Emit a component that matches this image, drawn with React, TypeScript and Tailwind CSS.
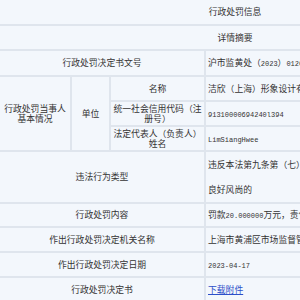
import React from 'react';

const cjk = { fontFamily: '"Noto Sans CJK SC", "Noto Sans", sans-serif' };

function Mono({ children }: { children: React.ReactNode }) {
  return (
    <span className="font-['Liberation_Mono',monospace] text-[7px]">{children}</span>
  );
}

const cell = 'border-2 border-[#dfe5ed] p-0';
const label = `${cell} text-center leading-[10px]`;
const value = `${cell} pl-[2px] text-left whitespace-nowrap`;

export default function App() {
  return (
    <div className="w-[300px] h-[300px] overflow-hidden bg-[#f3f7fc]" style={cjk}>
      <table className="table-fixed border-collapse w-[472px] -mt-[2px] -ml-[2px] text-[8.8px] text-[#333] bg-[#f3f7fc]">
        <colgroup>
          <col className="w-[72px]" />
          <col className="w-[39px]" />
          <col className="w-[95px]" />
          <col className="w-[266px]" />
        </colgroup>
        <tbody>
          <tr className="h-[26px]">
            <td colSpan={4} className={`${cell} text-center`}>
              行政处罚信息
            </td>
          </tr>
          <tr className="h-[25px]">
            <td colSpan={4} className={`${cell} text-center`}>
              详情摘要
            </td>
          </tr>
          <tr className="h-[26px]">
            <td colSpan={3} className={label}>
              行政处罚决定书文号
            </td>
            <td className={value}>
              沪市监黄处（<Mono>2023</Mono>）<Mono>012022023000385</Mono>号
            </td>
          </tr>
          <tr className="h-[25px]">
            <td rowSpan={3} className={`${label} px-[2px]`}>
              行政处罚当事人基本情况
            </td>
            <td rowSpan={3} className={label}>
              单位
            </td>
            <td className={label}>名称</td>
            <td className={value}>洁欣（上海）形象设计有限公司</td>
          </tr>
          <tr className="h-[25px]">
            <td className={label}>
              <span className="break-all">统一社会信用代码（注册号）</span>
            </td>
            <td className={value}>
              <Mono>91310000694240l394</Mono>
            </td>
          </tr>
          <tr className="h-[25px]">
            <td className={label}>法定代表人（负责人）姓名</td>
            <td className={value}>
              <Mono>LimSiangHwee</Mono>
            </td>
          </tr>
          <tr className="h-[50px]">
            <td colSpan={3} className={label}>
              违法行为类型
            </td>
            <td className={`${value} leading-[25px]`}>
              违反本法第九条第（七）项规定，妨碍社会公共秩序或者违背社会
              <br />
              良好风尚的
            </td>
          </tr>
          <tr className="h-[24px]">
            <td colSpan={3} className={label}>
              行政处罚内容
            </td>
            <td className={value}>
              罚款<Mono>20.000000</Mono>万元，责令停止发布违法广告
            </td>
          </tr>
          <tr className="h-[25px]">
            <td colSpan={3} className={label}>
              作出行政处罚决定机关名称
            </td>
            <td className={value}>上海市黄浦区市场监督管理局</td>
          </tr>
          <tr className="h-[25px]">
            <td colSpan={3} className={label}>
              作出行政处罚决定日期
            </td>
            <td className={value}>
              <Mono>2023-04-17</Mono>
            </td>
          </tr>
          <tr className="h-[25px]">
            <td colSpan={3} className={label}>
              行政处罚决定书
            </td>
            <td className={value}>
              <a href="#" className="text-[#2d4fc9] underline">
                下载附件
              </a>
            </td>
          </tr>
        </tbody>
      </table>
    </div>
  );
}
